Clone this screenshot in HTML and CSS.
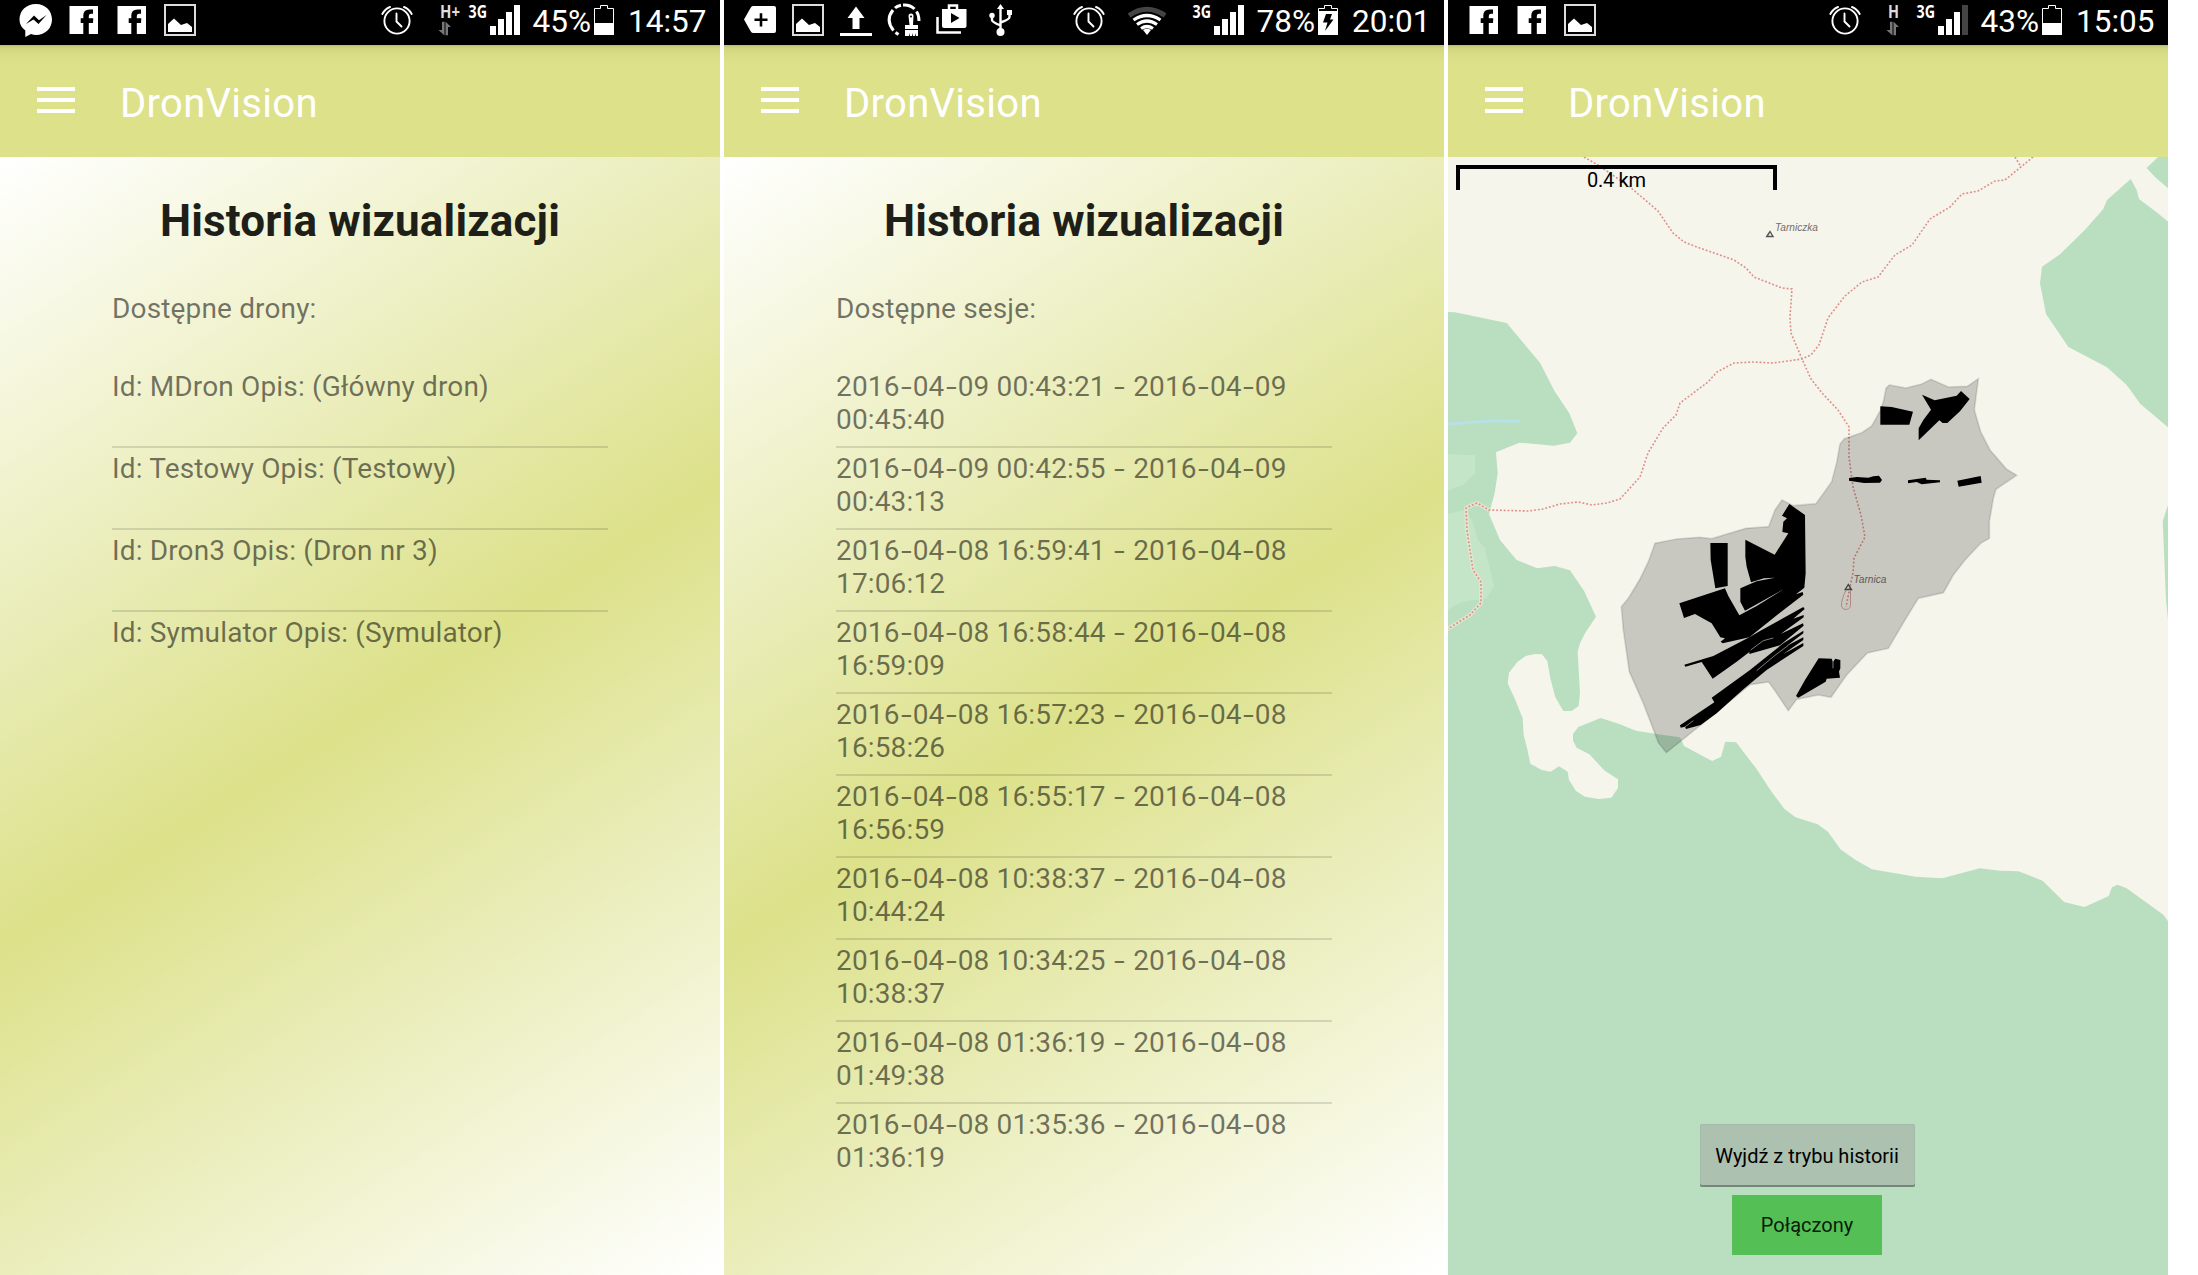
FILE: index.html
```html
<!DOCTYPE html>
<html lang="pl">
<head>
<meta charset="utf-8">
<title>DronVision</title>
<link rel="stylesheet" href="styles.css">
</head>
<body>
<svg class="defs" width="0" height="0" aria-hidden="true">
  <symbol id="facebook" viewBox="0 0 48 45"><path fill="#fff" fill-rule="evenodd" d="M9.500 6H38V34H28.800V23H33L33.300 18.300H28.800V16Q28.800 13.800 31 13.800H33V9.500H29.500Q23.300 9.500 23.300 15.500V18.300H20.700V23H23.300V34H9.500z"/></symbol>
  <symbol id="picture" viewBox="0 0 48 45"><path fill="none" stroke="#ddd" stroke-width="2" d="M9 5H39V35H9z"/><path fill="#fff" d="M12 32V24L18 18.500L25 25L31 23L36 27V32z"/></symbol>
  <symbol id="alarm" viewBox="0 0 32 45"><g fill="none" stroke="#fff" stroke-width="1.900" stroke-linecap="round"><circle cx="16" cy="21" r="12.600"/><path d="M1.300 14Q4 9 9 7M30.700 14Q28 9 23 7M15.500 13.500V21.500L20.500 26.500"/></g></symbol>
  <symbol id="arrows" viewBox="0 0 12 14"><path fill="#777" d="M3.500 0H6V14L0 8.500H3.500zM7 0L12.500 5.500H9.500V14H7z"/></symbol>
</svg>

<main class="screens">
  <section class="screen">
    <header class="status">
      <div class="notices">
        <svg viewBox="0 0 48 45"><path fill="#fff" d="M24 4C14 4 7.500 11 7.500 19.500Q7.500 26 13.300 30.500V37L19 34Q21.500 35 24 35C33.500 35 40 28 40 19.500S33.500 4 24 4z"/><path d="M14 24L22 15.500L27 20.200L34.500 15L26.500 24L21.500 19.500z"/></svg>
        <svg><use href="#facebook"/></svg>
        <svg><use href="#facebook"/></svg>
        <svg><use href="#picture"/></svg>
      </div>
      <div class="system">
        <svg class="alarm"><use href="#alarm"/></svg>
        <svg class="network" viewBox="436 0 84 45"><text class="net-type" x="440" y="18" textLength="20" lengthAdjust="spacingAndGlyphs">H+</text><use href="#arrows" x="438" y="21.500" width="13" height="14"/><text class="net-gen" x="468.500" y="18" textLength="18.500" lengthAdjust="spacingAndGlyphs">3G</text><path fill="#fff" d="M490 26h6v9h-6zM498 19h6v16h-6zM506 12h6v23h-6zM514 5h6v30h-6z"/></svg>
        <span class="percent">45%</span>
        <svg class="battery" viewBox="0 0 20 45"><path fill="none" stroke="#fff" d="M.5 8.500H6.500V5.500H13.500V8.500H19.500V34.500H.5z"/><path fill="#fff" d="M0 23h20v12H0z"/></svg>
        <span class="clock">14:57</span>
      </div>
    </header>
    <div class="appbar"><svg class="menu" viewBox="0 0 38 26"><path fill="#fff" d="M0 0h38v4H0zM0 11h38v4H0zM0 22h38v4H0z"/></svg><span class="brand">DronVision</span></div>
    <div class="history">
      <h1>Historia wizualizacji</h1>
      <p class="caption">Dostępne drony:</p>
      <ul class="rows">
        <li>Id: MDron Opis: (Główny dron)</li>
        <li>Id: Testowy Opis: (Testowy)</li>
        <li>Id: Dron3 Opis: (Dron nr 3)</li>
        <li>Id: Symulator Opis: (Symulator)</li>
      </ul>
    </div>
  </section>

  <section class="screen">
    <header class="status">
      <div class="notices">
        <svg viewBox="0 0 48 45"><path fill="#fff" d="M17 6H38Q40 6 40 8V31Q40 33 38 33H17Q15.500 33 14.500 31L8 19.500L14.500 8Q15.500 6 17 6z"/><path stroke="#000" stroke-width="2.600" d="M18.500 19.800H31.500M25 13.300V26.500"/></svg>
        <svg><use href="#picture"/></svg>
        <svg viewBox="0 0 48 45"><path fill="#fff" d="M24 6.500L32.500 18H27.500V29H20.500V18H15.500zM8 33h32v3H8z"/></svg>
        <svg viewBox="0 0 48 45"><path fill="none" stroke="#fff" stroke-width="3" d="M18.500 34.500L15.500 32.500M13.500 30.500Q5 20 13 10M15 8Q17 6 21 5.200M23 5Q30 4.500 34.500 9M36.500 11.500Q39 15 39 21"/><path fill="#fff" d="M28.500 16Q28.500 13.500 31 13.500T33.500 16L33 25H38V29H25V25H29.500zM25 30H38V36H36V33L35 36H33V33L32 36H30V33L29 36H25z"/><circle cx="31" cy="16.500" r="1"/></svg>
        <svg viewBox="0 0 48 45"><path fill="none" stroke="#fff" stroke-width="2.500" d="M9.500 17V32.500H33M21 9V5.500H29V9"/><path fill="#fff" d="M14 9H38.500V26Q38.500 28 36.500 28H16Q14 28 14 26z"/><path d="M23 13L31.500 18L23 23z"/></svg>
        <svg viewBox="0 0 48 45"><g fill="none" stroke="#fff" stroke-width="2.400"><path d="M24.500 8V31M16 16V20Q16 22 24.500 25.500M33.500 13V17Q33.500 19.500 24.500 22.500"/></g><path fill="#fff" d="M24.500 4L28 9H21zM31 10H36V15H31z"/><circle cx="16" cy="15.500" r="2.700" fill="#fff"/><circle cx="24.500" cy="32" r="4" fill="#fff"/></svg>
      </div>
      <div class="system">
        <svg class="alarm wide"><use href="#alarm"/></svg>
        <svg class="network extended" viewBox="404 0 116 45"><g fill="none" stroke="#fff" stroke-width="3.200"><path stroke="#444" stroke-width="5" d="M405 15.500Q423 3 441 15.500"/><path d="M409.500 20Q423 11 436.500 20M413 24.500Q423 17.500 433 24.500M417 28.500Q423 24.500 429 28.500"/></g><path fill="#fff" d="M419 30Q423 27.500 427 30L423 35z"/><text class="net-gen" x="468.500" y="18" textLength="18.500" lengthAdjust="spacingAndGlyphs">3G</text><path fill="#fff" d="M490 26h6v9h-6zM498 19h6v16h-6zM506 12h6v23h-6zM514 5h6v30h-6z"/></svg>
        <span class="percent">78%</span>
        <svg class="battery" viewBox="0 0 20 45"><path fill="none" stroke="#fff" d="M.5 11V8.500H6.500V5.500H13.500V8.500H19.500V11"/><path fill="#fff" d="M0 11h20v24H0z"/><path d="M8 14H14L12 19.500H15.500L7 31L9.500 22.500H5z"/></svg>
        <span class="clock">20:01</span>
      </div>
    </header>
    <div class="appbar"><svg class="menu" viewBox="0 0 38 26"><path fill="#fff" d="M0 0h38v4H0zM0 11h38v4H0zM0 22h38v4H0z"/></svg><span class="brand">DronVision</span></div>
    <div class="history">
      <h1>Historia wizualizacji</h1>
      <p class="caption">Dostępne sesje:</p>
      <ul class="rows sessions">
        <li>2016<i>-</i>04<i>-</i>09 00:43:21 <i>-</i> 2016<i>-</i>04<i>-</i>09<br>00:45:40</li>
        <li>2016<i>-</i>04<i>-</i>09 00:42:55 <i>-</i> 2016<i>-</i>04<i>-</i>09<br>00:43:13</li>
        <li>2016<i>-</i>04<i>-</i>08 16:59:41 <i>-</i> 2016<i>-</i>04<i>-</i>08<br>17:06:12</li>
        <li>2016<i>-</i>04<i>-</i>08 16:58:44 <i>-</i> 2016<i>-</i>04<i>-</i>08<br>16:59:09</li>
        <li>2016<i>-</i>04<i>-</i>08 16:57:23 <i>-</i> 2016<i>-</i>04<i>-</i>08<br>16:58:26</li>
        <li>2016<i>-</i>04<i>-</i>08 16:55:17 <i>-</i> 2016<i>-</i>04<i>-</i>08<br>16:56:59</li>
        <li>2016<i>-</i>04<i>-</i>08 10:38:37 <i>-</i> 2016<i>-</i>04<i>-</i>08<br>10:44:24</li>
        <li>2016<i>-</i>04<i>-</i>08 10:34:25 <i>-</i> 2016<i>-</i>04<i>-</i>08<br>10:38:37</li>
        <li>2016<i>-</i>04<i>-</i>08 01:36:19 <i>-</i> 2016<i>-</i>04<i>-</i>08<br>01:49:38</li>
        <li>2016<i>-</i>04<i>-</i>08 01:35:36 <i>-</i> 2016<i>-</i>04<i>-</i>08<br>01:36:19</li>
      </ul>
    </div>
  </section>

  <section class="screen">
    <header class="status">
      <div class="notices">
        <svg><use href="#facebook"/></svg>
        <svg><use href="#facebook"/></svg>
        <svg><use href="#picture"/></svg>
      </div>
      <div class="system">
        <svg class="alarm"><use href="#alarm"/></svg>
        <svg class="network" viewBox="436 0 84 45"><text class="net-type" x="440" y="18" textLength="11" lengthAdjust="spacingAndGlyphs">H</text><use href="#arrows" x="438" y="21.500" width="13" height="14"/><text class="net-gen" x="468.500" y="18" textLength="18.500" lengthAdjust="spacingAndGlyphs">3G</text><path fill="#fff" d="M490 26h6v9h-6zM498 19h6v16h-6zM506 12h6v23h-6z"/><path fill="#444" d="M514 5h6v30h-6z"/></svg>
        <span class="percent">43%</span>
        <svg class="battery" viewBox="0 0 20 45"><path fill="none" stroke="#fff" d="M.5 8.500H6.500V5.500H13.500V8.500H19.500V34.500H.5z"/><path fill="#fff" d="M0 23h20v12H0z"/></svg>
        <span class="clock">15:05</span>
      </div>
    </header>
    <div class="appbar"><svg class="menu" viewBox="0 0 38 26"><path fill="#fff" d="M0 0h38v4H0zM0 11h38v4H0zM0 22h38v4H0z"/></svg><span class="brand">DronVision</span></div>
    <div class="map">
      <svg class="terrain" viewBox="1448 157 720 1118">
        <!-- forest -->
        <g class="forest">
          <path transform="translate(1440 300) scale(.33333)" d="M20 36L45 37L200 69L300 188L343 272L388 340L412 400L390 428L342 437L238 428L168 457L173 520L164 580L147 642L180 720L230 780L292 805L344 798L390 811L432 872L468 950L435 1000L420 1030L413 1055L420 1180L416 1218L395 1233H370L346 1192L331 1135L322 1083L306 1063L285 1062L257 1068L232 1086L207 1118L203 1150L226 1200L248 1255L251 1305L263 1352L271 1391L305 1410L332 1415L357 1399L383 1415L387 1440L408 1473L435 1490L476 1497L514 1493L534 1464V1438L494 1412L448 1363L410 1343L399 1322V1302L415 1281L482 1254L540 1273L588 1292L645 1301L720 1312L732 1338L780 1364V1570H20z"/>
          <path transform="translate(1660 640) scale(.34311 .33333)" d="M0 286L60 295L68 318L152 363L178 350L190 305L222 307L280 385L325 455L362 506L395 532L460 553L490 576L526 628L570 660L618 688L745 710L823 715L932 685L990 692L1045 694L1115 722L1178 786L1237 801L1308 768L1317 742L1334 734L1360 745L1467 824L1485 850V1910H-630V540H0z"/>
          <path d="M2107 200L2130.700 179L2136.700 190L2139 199L2155 211L2170 223V429L2140.400 404L2126.700 385L2107 367.300L2068.400 347L2046 314L2040 283.300L2042 266.700L2060 254.300L2085.500 229.300L2103.300 209z"/>
          <path d="M2158 157L2146.500 168L2155 177L2170 190V157zM2170 499L2162.700 521L2166 600L2170 640z"/>
        </g>
        <g transform="translate(1440 300) scale(.33333)">
          <path class="scrub" d="M20 462L105 466V520L70 555L20 573zM20 642L75 630L98 665L115 722L133 740L162 858L140 895L65 905L20 932z"/>
          <path class="stream" d="M20 373L160 362L238 364"/>
        </g>
        <!-- trails -->
        <path class="trail-bed" d="M1489 510L1477 503L1466 508L1467 530L1473 570L1481 582V603L1470 615L1446 630"/>
        <g class="trail">
          <path d="M1584 157L1598 165L1630 187L1658 211L1673 233L1684 242L1697 247L1734 260L1746 268L1754 277L1782 288L1792 289L1790 317L1791 333L1802 359L1811 379L1823 394L1838 410L1849 427V457L1853 487L1861 515L1865 537L1854 558L1853 573L1850 587L1846 607"/>
          <path d="M2033 157L2005 180L1995 181L1978 191L1962 194L1950 207L1930 219L1912 245L1895 255L1888 264L1878 277L1862 282L1845 296L1828 318L1819 345L1811 355L1802 359L1773 363L1753 362L1734 363L1717 372L1708 382L1680 403L1676 415L1663 428L1648 453L1640 477L1620 499L1607 503L1592 505L1578 502L1560 504L1543 509L1528 511L1489 510L1477 503L1466 508L1467 530L1473 570L1481 582V603L1470 615L1446 630M2015 157L2021 167"/>
        </g>
        <path class="summit-ring" d="M1846 590Q1841 600 1841.500 606Q1842 609.500 1846 609.500Q1851 609 1850.500 604V590"/>
        <path class="peak" d="M1766.800 236.500L1770 231.500L1773 236.500zM1845.200 589.500L1848.300 584.500L1851.500 589.500z"/>
        <text class="place" x="1775" y="230.500" textLength="43" lengthAdjust="spacingAndGlyphs">Tarniczka</text>
        <text class="place" x="1853.500" y="583" textLength="33" lengthAdjust="spacingAndGlyphs">Tarnica</text>
        <!-- searched area and covered strips -->
        <g transform="translate(1660 360) scale(.33333)">
          <path class="area" d="M-15 550L50 537L118 532L155 536L258 505L326 500L345 450L366 420L400 437L468 431L515 365L530 308L540 252L553 236L605 218L635 198L662 150L670 125L678 85L688 75L738 84L785 72L813 58L865 81L922 79L955 56L943 150L962 215L990 270L1040 328L1070 346L1008 388L1000 415L988 485V535L962 550L915 600L880 645L850 698L775 715L735 780L685 865L622 879L560 945L513 1012L475 1005L410 1018L385 1052L345 992L326 966L270 974L110 1105L19 1178L-5 1148L-15 1121L-50 1030L-92 935L-110 810L-116 740L-95 715L-60 657L-35 605z"/>
          <path d="M661 139L695 141L759 155L748 194H661zM786 104L824 121L890 107L903 93L929 117L900 154L862 189H848L838 181L776 241V205L790 180L813 149zM567 354L590 351L625 353L640 349L657 347L666 360L660 368L612 369L567 362zM744 361L797 353L800 359L840 361V367L785 373L770 366L744 370zM892 362L962 348L965 368L896 380z"/>
          <path d="M151 549H203V678L166 685L152 600z"/>
          <path d="M388 432L435 465L437 640L433 683L408 703L428 696L430 704L355 762L268 832L188 850L182 845L195 835L181 832L155 790L105 762L72 774L58 730L195 685L205 708L238 766L290 738L370 688L255 752L241 725V685L290 664L345 653L312 655L273 667L260 620L256 590V539L344 584L385 520L367 516L370 485L381 475L366 467z"/>
          <path d="M73 914L160 888L265 833L300 813L430 741L434 747L400 776L431 765V772L362 822L429 790L431 797L360 856L268 882V876L230 905L158 956L125 906L76 920z"/>
          <path d="M155 1013L270 930L370 850L430 812V820L380 858L430 832V840L370 882L430 849V858L320 930L250 988L170 1060L122 1095L78 1107L75 1100L62 1103L60 1096L163 1027z"/>
          <path d="M476 895L515 896L519 905L526 896L541 900V925L537 935L540 953L500 956L497 965L415 1013L408 1008L435 960z"/>
          <path class="slit" d="M272 870L310 842L340 834M290 932L345 886L385 856M519 900V925M75 1101L100 1082"/>
        </g>
        <!-- scale bar -->
        <path class="scale" d="M1458 190V167H1775V190"/>
        <text class="scale-label" x="1587" y="187" textLength="59">0.4 km</text>
      </svg>
      <div class="actions">
        <button class="leave">Wyjdź z trybu historii</button>
        <button class="online">Połączony</button>
      </div>
    </div>
  </section>
</main>
</body>
</html>
```
FILE: styles.css
```css
body {
  margin: 0;
  background: #fff;
  font-family: Roboto, sans-serif;
}

.defs {
  position: absolute;
}

.screens {
  display: flex;
  gap: 4px;
  height: 1275px;
  overflow: hidden;
}

.screen {
  display: flex;
  flex-direction: column;
  width: 720px;
  flex: none;
}

.status {
  display: flex;
  justify-content: space-between;
  height: 45px;
  flex: none;
  padding-left: 12px;
  background: #000;
  color: #fff;
}

.notices,
.system {
  display: flex;
}

.notices svg {
  width: 48px;
  height: 45px;
}

.alarm {
  width: 32px;
  height: 45px;
  margin-right: 23px;
}

.network {
  width: 84px;
  height: 45px;
}

.network.extended {
  width: 116px;
}

.net-type,
.net-gen {
  fill: #ddd;
  font: 700 17px "Noto Sans", sans-serif;
}

.net-gen {
  fill: #fff;
}

.percent,
.clock {
  font-size: 31.5px;
  line-height: 43px;
  white-space: nowrap;
}

.percent {
  width: 71px;
  padding-right: 3px;
  text-align: right;
}

.battery {
  width: 20px;
  height: 45px;
}

.clock {
  width: 92px;
  padding-left: 14px;
}

.appbar {
  display: flex;
  align-items: center;
  height: 112px;
  flex: none;
  background: linear-gradient(#b9be76, #d1d681 3px, #d8dd86 10px, #dce18a 20px);
}

.menu {
  width: 38px;
  height: 26px;
  margin: 0 45px 2px 37px;
}

.brand {
  color: #fff;
  font-size: 40px;
  letter-spacing: .3px;
  line-height: 48px;
  padding-top: 5px;
}

.history {
  flex: 1;
  padding: 0 112px;
  background: linear-gradient(147.300deg, #fff, #dce18a 50%, #fff);
}

h1 {
  margin: 0;
  padding-top: 38px;
  color: #1e1f18;
  font-size: 44px;
  font-weight: 700;
  letter-spacing: .17px;
  line-height: 52px;
  text-align: center;
  white-space: nowrap;
}

.caption,
.rows {
  color: rgba(0, 0, 0, .54);
  font-size: 28px;
  letter-spacing: .15px;
  line-height: 33px;
}

.caption {
  margin: 0;
  padding-top: 45px;
}

.rows {
  margin: 41px 0 0;
  padding: 0;
  list-style: none;
}

.rows li {
  box-sizing: border-box;
  height: 82px;
  padding-top: 4px;
  border-bottom: 2px solid rgba(0, 0, 0, .12);
  white-space: nowrap;
}

.rows li:last-child {
  border-bottom: 0;
}

/* wide hyphens inside dates */
.sessions i {
  display: inline-block;
  width: 13.2px;
  font-style: normal;
  text-align: center;
  transform: scaleX(1.4);
}

.map {
  position: relative;
  flex: 1;
  background: #f5f5ec;
}

.terrain {
  display: block;
  width: 720px;
  height: 1118px;
}

.forest {
  fill: #b9dfc0;
}

.scrub {
  fill: #c5e5c8;
}

.stream {
  fill: none;
  stroke: #b8e0ea;
  stroke-width: 8;
}

.trail-bed {
  fill: none;
  stroke: #dfe6cf;
  stroke-width: 4;
}

.trail {
  fill: none;
  stroke: #dd8f88;
  stroke-width: 1.6;
  stroke-dasharray: 1.9 1.9;
}

.summit-ring {
  fill: none;
  stroke: #d9a8a4;
  stroke-width: 1;
}

.peak {
  fill: none;
  stroke: #555;
  stroke-width: 1.4;
}

.place {
  fill: #766d6b;
  font: italic 11px "Liberation Sans", sans-serif;
}

.area {
  fill: rgba(0, 0, 0, .18);
  stroke: rgba(0, 0, 0, .12);
  stroke-width: 5;
}

.slit {
  fill: none;
  stroke: #bbb;
  stroke-width: 2;
}

.scale {
  fill: none;
  stroke: #000;
  stroke-width: 4;
}

.scale-label {
  font-size: 20px;
}

.actions {
  position: absolute;
  inset: auto 2px 20px 0;
  display: flex;
  flex-direction: column;
  align-items: center;
  gap: 8px;
}

.actions button {
  padding: 0;
  border: 0;
  color: #000;
  font: 20px/24px Roboto, sans-serif;
  white-space: nowrap;
}

.leave {
  width: 215px;
  height: 63px;
  border-radius: 2px;
  background: #acc1af;
  box-shadow: inset 0 -2px #75877a, inset 0 0 0 1px #a5baa8;
}

.actions .online {
  width: 150px;
  height: 60px;
  background: #54bf54;
  color: #0a1c0a;
}
```
